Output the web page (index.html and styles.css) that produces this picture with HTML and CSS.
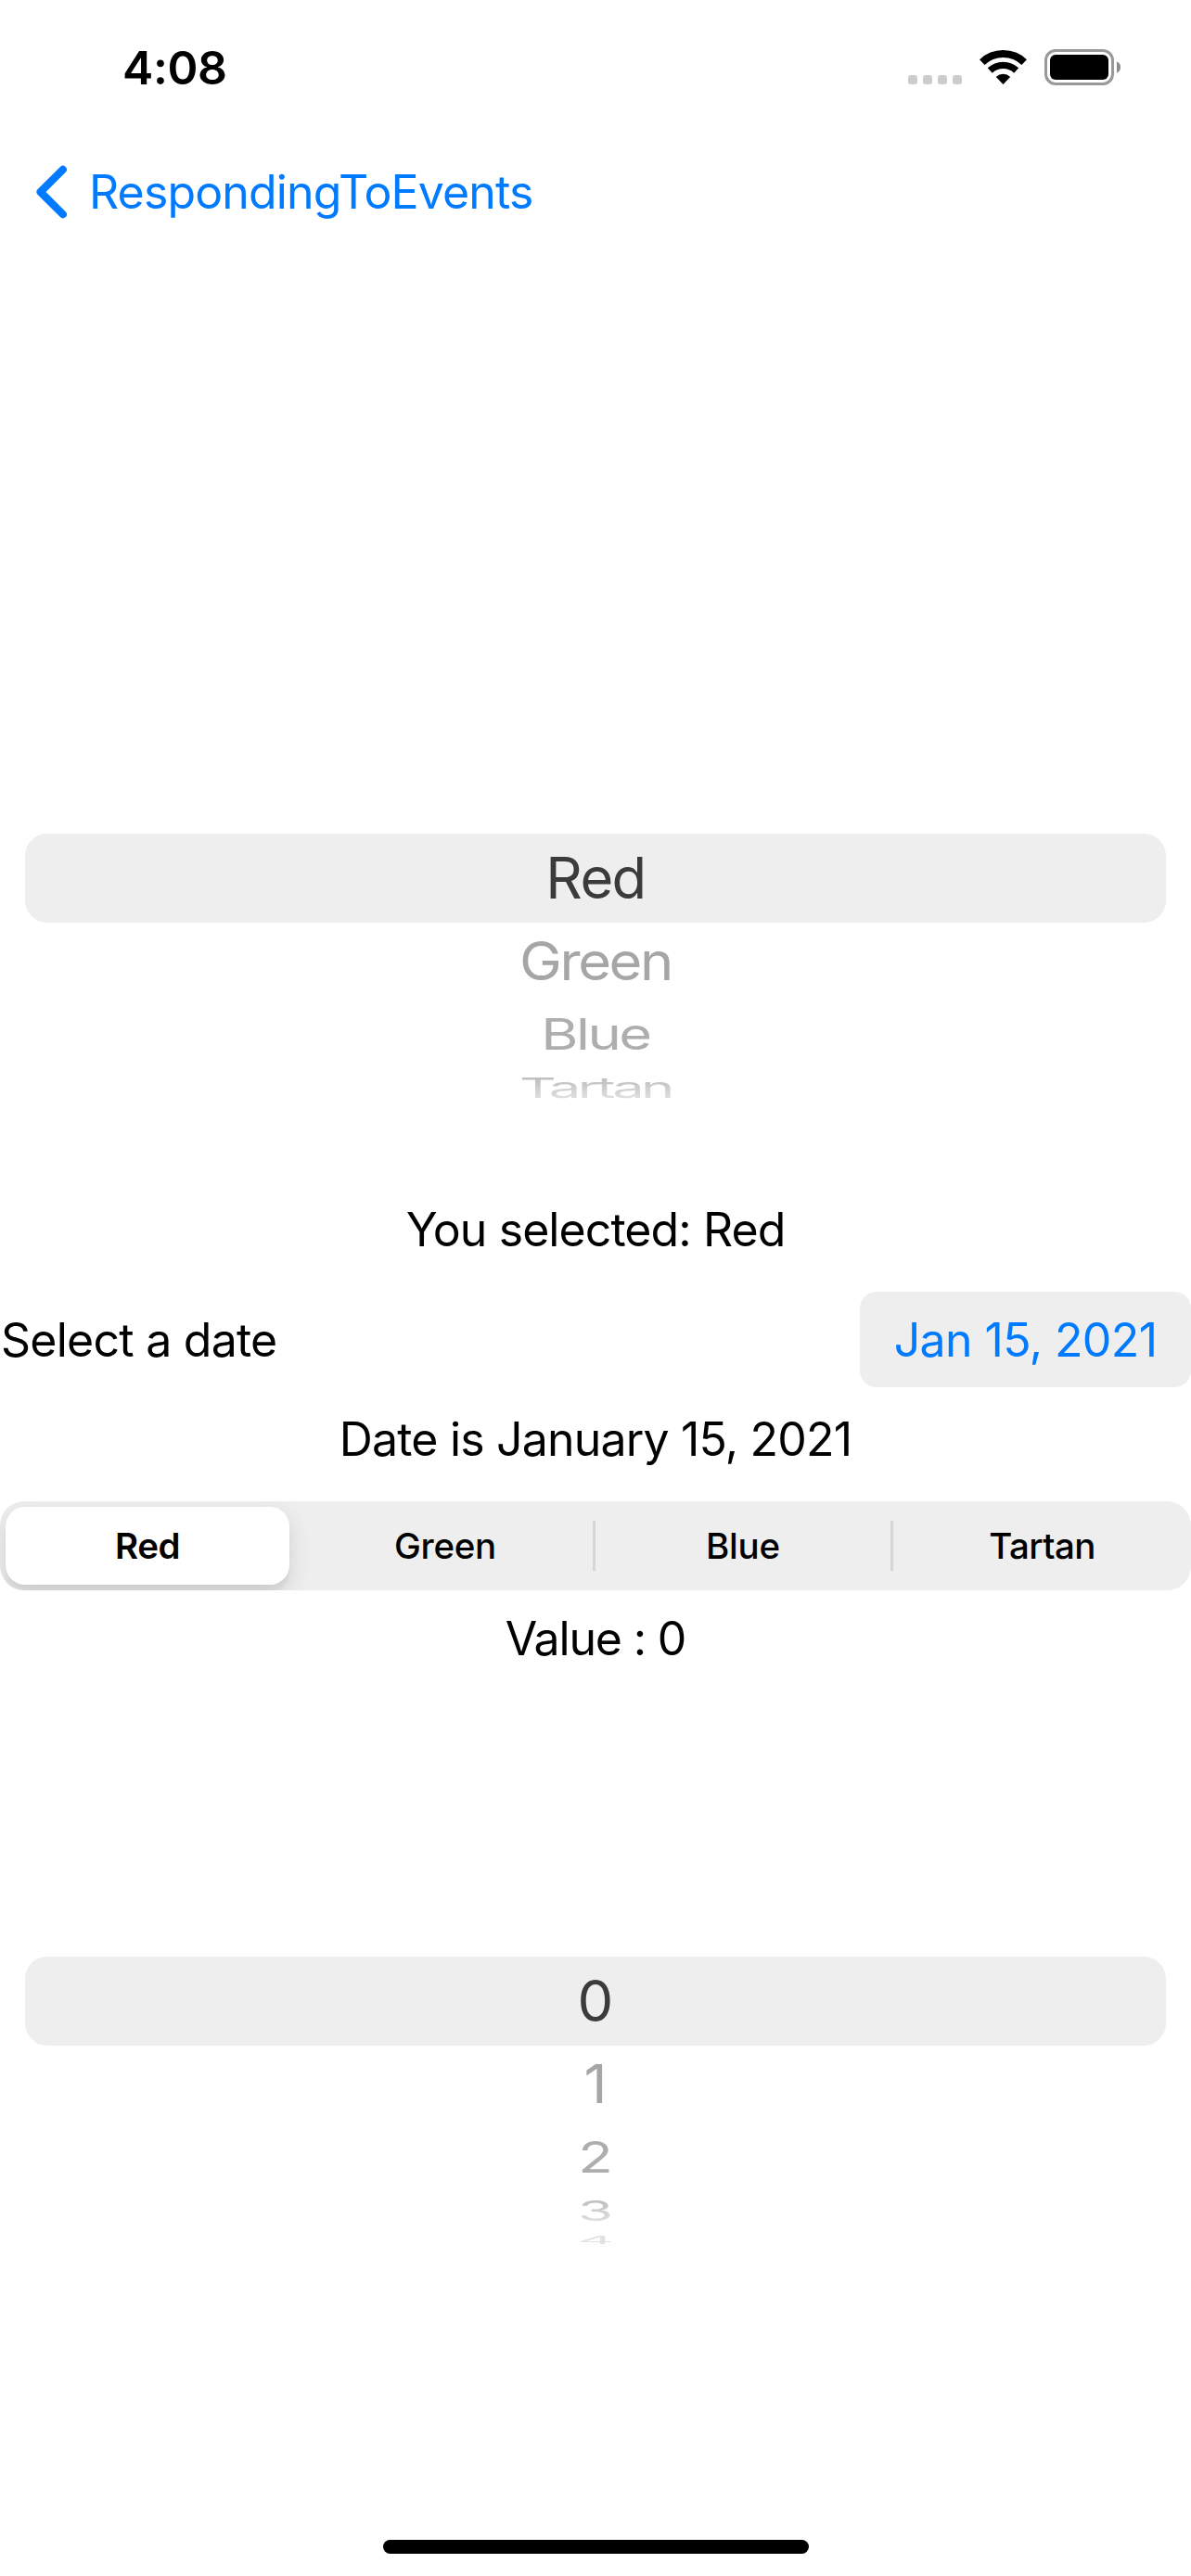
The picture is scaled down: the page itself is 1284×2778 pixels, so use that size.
FILE: index.html
```
<!DOCTYPE html>
<html lang="en">
<head>
<meta charset="utf-8">
<title>RespondingToEvents</title>
<link rel="stylesheet" href="styles.css">
</head>
<body>
<div class="screen">
  <header class="status">
    <span class="time">4:08</span>
    <div class="indicators">
      <div class="signal"><i></i><i></i><i></i><i></i></div>
      <svg class="wifi" width="51" height="39" viewBox="0 0 51 39">
        <path d="M2.8 14.1A33 33 0 0 1 48.2 14.1" fill="none" stroke="#000" stroke-width="8"/>
        <path d="M11.3 23A20.7 20.7 0 0 1 39.7 23" fill="none" stroke="#000" stroke-width="7.4"/>
        <path d="M25.5 38L17.8 29.9A11.2 11.2 0 0 1 33.2 29.9Z"/>
      </svg>
      <svg class="battery" width="82" height="39" viewBox="0 0 82 39">
        <rect x="1.5" y="1.5" width="72" height="36" rx="10.5" fill="none" stroke="#999" stroke-width="3"/>
        <rect x="6" y="6" width="63" height="27" rx="6"/>
        <path d="M78 13.3Q82 15.3 82 19.5T78 25.7Z" fill="#8c8c8c"/>
      </svg>
    </div>
  </header>

  <nav class="nav">
    <svg width="33" height="58" viewBox="0 0 33 58">
      <path d="M28.8 4.8L4.6 29L28.8 53.2" fill="none" stroke="#007aff" stroke-width="8.2" stroke-linecap="round" stroke-linejoin="round"/>
    </svg>
    <a class="back">RespondingToEvents</a>
  </nav>

  <main class="content">
    <div class="wheel colors">
      <div class="row selected"><span class="w-red">Red</span></div>
      <div class="row near"><span class="w-green">Green</span></div>
      <div class="row mid"><span class="w-blue">Blue</span></div>
      <div class="row far"><span class="w-tartan">Tartan</span></div>
    </div>

    <p class="label chosen">You selected: Red</p>

    <div class="date-row">
      <span class="date-title">Select a date</span>
      <button class="date-value">Jan 15, 2021</button>
    </div>

    <p class="label date-text">Date is January 15, 2021</p>

    <div class="segmented">
      <div class="segment active">Red</div>
      <div class="segment second">Green</div>
      <div class="segment third">Blue</div>
      <div class="segment fourth">Tartan</div>
    </div>

    <p class="label value">Value : 0</p>

    <div class="wheel numbers">
      <div class="row selected"><span>0</span></div>
      <div class="row near"><span>1</span></div>
      <div class="row mid"><span>2</span></div>
      <div class="row far"><span>3</span></div>
      <div class="row edge"><span>4</span></div>
    </div>
  </main>

  <footer class="home"><div class="home-bar"></div></footer>
</div>
</body>
</html>
```
FILE: styles.css
```
* {
  box-sizing: border-box;
}

body {
  margin: 0;
  background: #fff;
  color: #000;
  font-family: Inter, "Liberation Sans", sans-serif;
  font-size: 50px;
}

.screen {
  display: flex;
  flex-direction: column;
  width: 1284px;
  height: 2778px;
  overflow: hidden;
}

/* Status bar */
.status {
  display: flex;
  justify-content: space-between;
  align-items: center;
  height: 145px;
  padding: 0 76px 0 132px;
}

.time {
  font-weight: 600;
  letter-spacing: -0.41px;
}

.indicators {
  display: flex;
  align-items: flex-end;
}

.signal {
  display: flex;
  gap: 6px;
  margin: 0 19px 1px 0;
}

.signal i {
  width: 10px;
  height: 10px;
  border-radius: 3px;
  background: #ccc;
}

.battery {
  margin-left: 19px;
}

/* Navigation bar */
.nav {
  display: flex;
  align-items: center;
  gap: 24px;
  height: 124px;
  padding-left: 39px;
}

.back {
  color: #007aff;
  letter-spacing: -0.86px;
}

.content {
  display: flex;
  flex: 1;
  flex-direction: column;
  padding-top: 630px;
}

/* Picker wheels */
.wheel {
  display: flex;
  flex-direction: column;
  padding: 0 27px;
  font-size: 61.5px;
  line-height: 1;
}

.colors {
  height: 380px;
}

.numbers {
  height: 380px;
  margin-top: 294px;
}

.row {
  display: flex;
  justify-content: center;
  align-items: center;
}

.row span {
  display: block;
}

.selected {
  height: 96px;
  border-radius: 24px;
  background: #eee;
  color: #3b3b3b;
}

.near {
  height: 83px;
  color: #a6a6a6;
}

.near span {
  transform: scaleY(0.93);
}

.mid {
  height: 73px;
  color: #aeaeae;
}

.mid span {
  transform: scaleY(0.755);
}

.far {
  height: 43px;
  color: #bebebe;
}

.far span {
  transform: scaleY(0.49);
  mask-image: linear-gradient(#000 15%, rgba(0, 0, 0, 0.5) 85%);
}

.edge {
  height: 21px;
  color: #e2e2e2;
}

.edge span {
  transform: scaleY(0.2);
}

.w-red {
  letter-spacing: -1.62px;
}

.w-green {
  letter-spacing: -2.43px;
}

.w-blue {
  letter-spacing: -2.5px;
}

.w-tartan {
  letter-spacing: -3.56px;
}

/* Text rows */
.label {
  margin: 0;
  text-align: center;
}

.chosen {
  height: 114px;
  line-height: 94px;
  letter-spacing: -0.92px;
}

.date-row {
  display: flex;
  justify-content: space-between;
  align-items: center;
  height: 103px;
}

.date-title {
  padding-left: 1px;
  letter-spacing: -0.76px;
}

.date-value {
  width: 357px;
  height: 103px;
  padding: 0;
  border: 0;
  border-radius: 18px;
  background: #eee;
  color: #007aff;
  font: inherit;
  letter-spacing: -0.6px;
}

.date-text {
  height: 123px;
  line-height: 112px;
  letter-spacing: -0.82px;
}

/* Segmented control */
.segmented {
  display: flex;
  align-items: center;
  height: 96px;
  border-radius: 26px;
  background: #eee;
  font-size: 38.5px;
  font-weight: 500;
  overflow: hidden;
}

.segment {
  display: flex;
  justify-content: center;
  align-items: center;
  height: 54px;
}

.active {
  width: 306px;
  height: 84px;
  margin: 0 9px 0 6px;
  border-radius: 21px;
  background: #fff;
  box-shadow: 0 9px 24px rgba(0, 0, 0, 0.12), 0 9px 3px rgba(0, 0, 0, 0.04);
  font-weight: 600;
  letter-spacing: -0.45px;
}

.second {
  width: 318px;
  letter-spacing: -0.29px;
}

.third {
  width: 321px;
  border-left: 3px solid #d6d6d7;
  letter-spacing: -0.21px;
}

.fourth {
  width: 324px;
  border-left: 3px solid #d6d6d7;
  letter-spacing: -0.58px;
}

.value {
  height: 101px;
  line-height: 105px;
  letter-spacing: -1.17px;
}

/* Home indicator */
.home {
  display: flex;
  justify-content: center;
  height: 39px;
}

.home-bar {
  width: 459px;
  height: 15px;
  border-radius: 8px;
  background: #000;
}
```
